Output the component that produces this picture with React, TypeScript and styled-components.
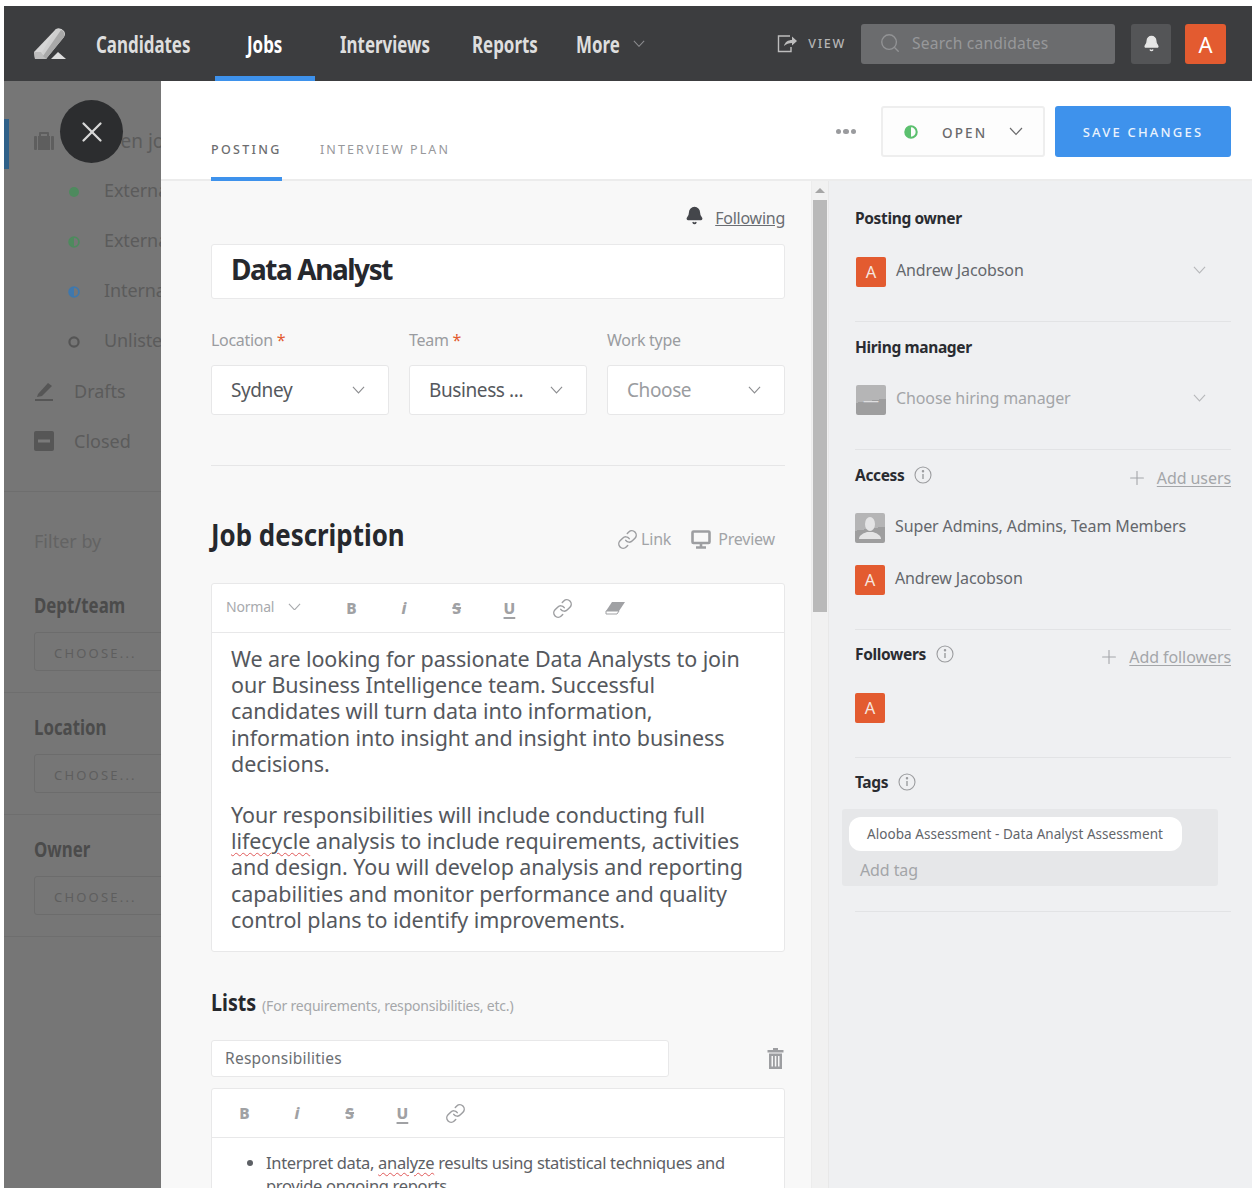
import React from "react";
import styled, { createGlobalStyle } from "styled-components";
import { Bell, Search, Plus, X, Link as LinkIcon } from "lucide-react";

const SANS = `"Noto Sans", "Open Sans", sans-serif`;

const Global = createGlobalStyle`
  html, body { margin: 0; padding: 0; background: #fff; }
  body { font-family: ${SANS}; }
  * { box-sizing: border-box; }
`;

const Page = styled.div`
  width: 1260px; height: 1196px; padding: 6px 8px 8px 4px; background: #fff;
`;
const Frame = styled.div`
  width: 1248px; height: 1182px; overflow: hidden; display: flex; flex-direction: column; position: relative;
`;
const Nav = styled.header`
  height: 75px; flex: none; background: #3c3d3f; display: flex; align-items: stretch; position: relative;
`;
const Logo = styled.div`
  width: 92px; padding: 22px 0 0 30px; flex: none;
`;
const NavItems = styled.nav`display: flex; align-items: stretch;`;
const NavItem = styled.div<{ $w: number; $active?: boolean; $pl?: number }>`
  width: ${p => p.$w}px; padding-left: ${p => p.$pl ?? 0}px;
  display: flex; align-items: center;
  border-bottom: 5px solid ${p => (p.$active ? "#3e92ec" : "transparent")};
  padding-top: 5px;
  color: ${p => (p.$active ? "#fff" : "#dedede")};
`;
const NavLabel = styled.span`
  display: inline-block; font-weight: 700; font-size: 23px; white-space: nowrap;
  transform: scaleX(.735); transform-origin: left center;
`;
const NavChev = styled.span`display: flex; margin-left: -3px;`;
const NavRight = styled.div`
  margin-left: auto; display: flex; align-items: center; padding-right: 26px; height: 75px;
`;
const ViewLink = styled.div`
  display: flex; align-items: center; gap: 10px; margin-right: 15px; color: #b5b5b5;
  font-size: 12.5px; letter-spacing: 1.7px; font-weight: 500;
`;
const SearchBox = styled.div`
  width: 254px; height: 40px; border-radius: 3px; background: #6b6c6e; display: flex; align-items: center;
  padding-left: 18px; gap: 11px; color: #97989a; font-size: 15.6px; margin-right: 16px; letter-spacing: .2px; padding-bottom: 2px;
`;
const NavBtn = styled.div<{ $orange?: boolean }>`
  width: ${p => (p.$orange ? 41 : 40)}px; height: 40px; border-radius: 3px; display: flex; align-items: center; justify-content: center;
  background: ${p => (p.$orange ? "#e35b30" : "#545557")}; color: #fff; font-size: 22px;
  margin-right: ${p => (p.$orange ? 0 : 14)}px;
`;

const Content = styled.div`flex: 1; display: flex; min-height: 0;`;

const Sidebar = styled.aside`
  width: 157px; flex: none; background: #767676; overflow: hidden; position: relative; color: #5b5b5b;
`;
const SideInner = styled.div`width: 300px; padding-top: 38px;`;
const SideActive = styled.div`
  height: 50px; border-left: 5px solid #2f6088; display: flex; align-items: center; padding: 0 0 6px 25px; gap: 40px;
  font-size: 19px;
`;
const SideSub = styled.div`
  height: 50px; display: flex; align-items: center; padding-left: 64px; gap: 24px; font-size: 18px; letter-spacing: -.1px;
  position: relative; top: -4px;
`;
const DotSlot = styled.span`width: 12px; height: 14px; display: flex; align-items: center; justify-content: center; flex: none; padding-top: 3px; box-sizing: content-box;`;
const SideMain = styled.div`
  height: 50px; display: flex; align-items: center; padding-left: 30px; gap: 20px; font-size: 18px;
  position: relative; top: -3px;
`;
const FilterBy = styled.div`
  height: 80px; padding: 36px 0 0 30px; font-size: 18px; line-height: 26px; color: #636363; border-top: 1px solid #6e6e6e;
  margin-top: 22px;
`;
const FilterGroup = styled.div`
  height: 122px; padding: 0 0 0 30px; border-bottom: 1px solid #6e6e6e; display: flex; flex-direction: column;
`;
const FilterTitle = styled.div`
  font-weight: 700; font-size: 22px; color: #4b4b4b; height: 38px; padding-top: 20px; line-height: 26px;
  margin-bottom: 3px; box-sizing: content-box; white-space: nowrap;
  transform: scaleX(.765); transform-origin: left center;
`;
const FilterBox = styled.div`
  width: 220px; height: 39px; border: 1px solid #6c6c6c; border-radius: 3px; padding-left: 19px; line-height: 40px;
  font-size: 13px; letter-spacing: 2.2px; color: #5e5e5e;
`;
const CloseBtn = styled.button`
  position: absolute; left: 56px; top: 19px; width: 63px; height: 63px; border-radius: 50%; border: 0; padding: 0;
  background: #2c2d2f; color: #d8d8d8; display: flex; align-items: center; justify-content: center;
`;

const Panel = styled.main`flex: 1; display: flex; flex-direction: column; min-width: 0; background: #fff;`;
const PanelHead = styled.div`
  height: 100px; flex: none; border-bottom: 2px solid #ececec; display: flex; position: relative; padding-left: 50px;
  align-items: flex-start;
`;
const Tab = styled.div<{ $active?: boolean }>`
  height: 100px; padding-top: 60px; width: ${p => (p.$active ? 71 : 160)}px; margin-right: ${p => (p.$active ? 38 : 0)}px;
  font-size: 12.5px; line-height: 18px; letter-spacing: ${p => (p.$active ? 2.3 : 2.1)}px; font-weight: ${p => (p.$active ? 500 : 400)};
  color: ${p => (p.$active ? "#6d6d6f" : "#97989b")}; white-space: nowrap;
  border-bottom: 4px solid ${p => (p.$active ? "#3e92ec" : "transparent")};
`;
const HeadActions = styled.div`
  margin-left: auto; display: flex; align-items: center; padding: 25px 21px 0 0; height: 76px;
`;
const Dots = styled.div`
  display: flex; gap: 2px; margin-right: 25px;
  & > i { width: 5.5px; height: 5.5px; border-radius: 50%; background: #9a9b9e; display: block; }
`;
const StatusBtn = styled.div`
  width: 164px; height: 51px; border: 2px solid #eeeeee; border-radius: 3px; background: #fdfdfd; display: flex; align-items: center;
  padding-left: 21px; margin-right: 10px;
`;
const StatusText = styled.span`
  font-size: 13.5px; letter-spacing: 2.1px; color: #6a6a6c; margin-left: 24px; width: 67px; font-weight: 500; padding-top: 2px;
`;
const SaveBtn = styled.div`
  width: 176px; height: 51px; border-radius: 3px; background: #3e92ec; color: #eaf3fd; display: flex; align-items: center;
  justify-content: center; font-size: 13px; letter-spacing: 2.2px; font-weight: 500;
`;

const PanelBody = styled.div`flex: 1; display: flex; min-height: 0;`;
const EditCol = styled.div`
  width: 650px; flex: none; background: #f8f8f8; padding: 0 26px 0 50px; overflow: hidden;
`;
const FollowRow = styled.div`
  height: 63px; display: flex; align-items: flex-start; justify-content: flex-end; gap: 11px; padding-top: 25px;
`;
const Following = styled.span`
  font-size: 16px; line-height: 24px; color: #6a6d72; text-decoration: underline; letter-spacing: -.25px;
`;
const TitleInput = styled.div`
  height: 55px; background: #fff; border: 1px solid #e9e9ea; border-radius: 3px; padding-left: 19px; line-height: 49px;
  font-weight: 700; font-size: 28px; color: #26282d; letter-spacing: -1.45px;
`;
const FieldGrid = styled.div`
  display: grid; grid-template-columns: repeat(3, 178px); column-gap: 20px; margin-top: 29px;
  padding-bottom: 50px; border-bottom: 1px solid #e6e6e7;
`;
const Field = styled.div`display: flex; flex-direction: column;`;
const FieldLabel = styled.label`
  font-size: 16px; line-height: 24px; color: #9a9ca0; height: 37px; letter-spacing: -.3px;
  & > b { color: #e35b30; font-weight: 400; }
`;
const SelectBox = styled.div<{ $placeholder?: boolean }>`
  height: 50px; background: #fff; border: 1px solid #e7e7e8; border-radius: 3px; display: flex; align-items: center;
  justify-content: space-between; padding: 0 23px 0 19px; font-size: 19px; letter-spacing: -.4px;
  color: ${p => (p.$placeholder ? "#9a9ca0" : "#55585d")};
`;
const DescHead = styled.div`
  display: flex; align-items: center; justify-content: space-between; height: 48px; margin-top: 44px; padding-right: 10px;
`;
const H2 = styled.h2`
  margin: 0; font-weight: 700; font-size: 31px; color: #26282d; white-space: nowrap;
  transform: scaleX(.835); transform-origin: left center;
`;
const DescTools = styled.div`display: flex; align-items: center; gap: 20px; padding-top: 10px;`;
const Tool = styled.span`
  display: flex; align-items: center; gap: 3px; font-size: 16px; color: #a2a4a7; letter-spacing: -.2px;
`;
const Editor = styled.div<{ $mt: number }>`
  background: #fff; border: 1px solid #e8e8e9; border-radius: 3px; margin-top: ${p => p.$mt}px;
`;
const Toolbar = styled.div<{ $h: number; $pl: number }>`
  height: ${p => p.$h}px; display: flex; align-items: center; padding-left: ${p => p.$pl}px; border-bottom: 1px solid #e8e8e9; color: #a3a4a7;
`;
const StyleSelect = styled.div`
  display: flex; align-items: center; gap: 14px; width: 99px; font-size: 14px; color: #a8aaad; letter-spacing: -.2px; flex: none; padding-bottom: 3px;
`;
const Fmt = styled.span`
  width: 52.7px; flex: none; display: flex; align-items: center; justify-content: center;
`;
const FmtGlyph = styled.span<{ $i?: boolean; $s?: boolean; $u?: boolean }>`
  font-size: 15.5px; font-weight: 800; color: #a0a1a4; line-height: 20px;
  font-style: ${p => (p.$i ? "italic" : "normal")};
  text-decoration: ${p => (p.$s ? "line-through" : p.$u ? "underline" : "none")};
  text-decoration-thickness: 1.5px; text-underline-offset: 3px;
  padding: ${p => (p.$s ? "0 2px" : "0")};
`;
const EditorText = styled.div`
  padding: 13px 19px 18px; font-size: 21.5px; line-height: 26.2px; color: #55585d; letter-spacing: -.08px; white-space: nowrap;
`;
const ParaGap = styled.div`height: 25px;`;
const Misspelt = styled.span`text-decoration: underline wavy #e05a5a 1px; text-underline-offset: 3px;`;
const ListsHead = styled.div`
  display: flex; align-items: baseline; gap: 6px; margin-top: 33px; height: 35px;
`;
const ListsTitle = styled.h3`
  margin: 0 -10px 0 0; font-weight: 700; font-size: 24px; color: #26282d;
  transform: scaleX(.82); transform-origin: left center;
`;
const ListsNote = styled.span`font-size: 14px; color: #a5a7aa; letter-spacing: -.2px;`;
const ListNameRow = styled.div`
  display: flex; align-items: center; justify-content: space-between; margin-top: 20px; padding-right: 1px;
`;
const ListName = styled.div`
  width: 458px; height: 37px; background: #fff; border: 1px solid #e8e8e9; border-radius: 3px; padding-left: 13px; line-height: 34px;
  font-size: 15.5px; color: #6c6f73; letter-spacing: .25px;
`;
const Bullets = styled.ul`
  margin: 0; padding: 13px 0 0 54px; font-size: 16.5px; line-height: 23px; color: #5d6065; letter-spacing: -.33px; white-space: nowrap;
`;

const ScrollTrack = styled.div`
  width: 18px; flex: none; background: #f1f1f1; border-left: 1px solid #ececec; border-right: 1px solid #e8e8e8; padding: 7px 1px 0;
  display: flex; flex-direction: column; align-items: center;
`;
const ScrollArrow = styled.div`
  width: 0; height: 0; border-left: 5px solid transparent; border-right: 5px solid transparent; border-bottom: 5px solid #a6a6a6; margin-bottom: 7px;
`;
const ScrollThumb = styled.div`width: 14px; height: 412px; background: #b9b9b9;`;

const SideCol = styled.div`
  flex: 1; background: #eff0f2; padding: 12px 21px 0 26px;
`;
const Section = styled.section<{ $h: number; $pt?: number }>`
  height: ${p => p.$h}px; border-bottom: 1px solid #e2e3e5; padding-top: ${p => p.$pt ?? 14}px;
`;
const SecHead = styled.div`display: flex; align-items: center; justify-content: space-between; height: 22px;`;
const SecTitleWrap = styled.div`display: flex; align-items: center; gap: 10px;`;
const SecTitle = styled.h4`
  margin: 0; font-size: 15.5px; line-height: 22px; font-weight: 700; color: #2a2c31; letter-spacing: -.35px;
`;
const AddLink = styled.span`
  display: flex; align-items: center; gap: 9px; color: #a4a6a9; font-size: 16px; position: relative; top: 3px; letter-spacing: -.08px;
  & > u { text-underline-offset: 2px; }
`;
const PersonRow = styled.div<{ $mt: number; $pl?: number }>`
  display: flex; align-items: center; gap: 10px; height: 30px; margin-top: ${p => p.$mt}px; padding-left: ${p => p.$pl ?? 0}px;
`;
const PersonName = styled.span<{ $muted?: boolean }>`
  font-size: 16px; color: ${p => (p.$muted ? "#a3a5a8" : "#64676c")}; letter-spacing: -.12px; margin-bottom: 4px;
`;
const Caret = styled.span`margin: 0 25px 4px auto; display: flex; color: #b7b8bb;`;
const Avatar = styled.div`
  width: 30px; height: 30px; border-radius: 2px; background: #e35b30; color: #f6e5df; font-size: 16.5px; display: flex; align-items: center; justify-content: center; flex: none; padding-bottom: 2px;
`;
const GreyAvatar = styled.div`
  width: 30px; height: 30px; border-radius: 2px; flex: none; overflow: hidden; color: #dfdfe0;
  background: linear-gradient(172deg, #b5b5b6 0 52%, #9e9e9f 52% 100%); display: flex; align-items: center; justify-content: center;
`;
const TagBox = styled.div`
  margin: 16px 0 0 -13px; width: 376px; height: 77px; background: #e6e7e9; border-radius: 3px; padding: 8px 0 0 7px;
`;
const TagChip = styled.div`
  width: 333px; height: 34px; border-radius: 12px; background: #fff; display: flex; align-items: center; padding-left: 18px;
  font-size: 13.5px; color: #62656a; letter-spacing: .06px; white-space: nowrap;
`;
const AddTag = styled.div`
  font-size: 16px; color: #a3a5a8; line-height: 24px; margin: 7px 0 0 11px; letter-spacing: -.1px;
`;

const Chev = ({ c = "#8c8d90", w = 13 }: { c?: string; w?: number }) => (
  <svg width={w} height={w * 0.6} viewBox="0 0 14 8.4" fill="none" stroke={c} strokeWidth="1.2">
    <polyline points="1,1 7,7.4 13,1" />
  </svg>
);

const HalfDot = ({ c, size = 14 }: { c: string; size?: number }) => (
  <svg width={size} height={size} viewBox="0 0 14 14">
    <circle cx="7" cy="7" r="5.7" fill="none" stroke={c} strokeWidth="2.1" />
    <path d="M7 1.500a5.500 5.500 0 0 0 0 11z" fill={c} />
  </svg>
);

const InfoIcon = () => (
  <svg width="18" height="18" viewBox="0 0 18 18" fill="none" stroke="#9b9c9f" strokeWidth="1.1">
    <circle cx="9" cy="9" r="8" />
    <line x1="9" y1="8" x2="9" y2="13" strokeWidth="1.4" />
    <circle cx="9" cy="5.3" r=".7" fill="#9b9c9f" />
  </svg>
);

const LogoMark = () => (
  <svg width="33" height="32" viewBox="0 0 33 32">
    <path d="M0 24 L22 1 L28 1 L12 31 L1 31 Z" fill="#d6d6d6" />
    <path d="M1 31 L0 24 L7 24 L12 31 Z" fill="#bdbdbd" />
    <path d="M22 1 Q26 -1 30 3 Q32 6 30 9 L12 31 L8 24 Z" fill="#cfcfcf" />
    <path d="M27 2 Q31 3 30 9 L12 31 L9 28 Z" fill="#a8a8a8" />
    <path d="M17 31 L24 24 L32 31 Z" fill="#dedede" />
  </svg>
);

const ViewIcon = () => (
  <svg width="21" height="19" viewBox="0 0 21 19" fill="none" stroke="#bdbdbd" strokeWidth="1.4">
    <path d="M13 2H1.500v15.500H14V13" />
    <path d="M7 12c1-4 4-6 8-6V2.500l5 4.500-5 4.500V9c-3 0-6 1-8 3z" fill="#bdbdbd" stroke="none" />
  </svg>
);

const Briefcase = () => (
  <svg width="20" height="18" viewBox="0 0 20 18" fill="#5e5e5e">
    <path d="M7 4V2h6v2h2V1a1 1 0 0 0-1-1H6a1 1 0 0 0-1 1v3z" />
    <rect x="0" y="4" width="3" height="14" rx="1" />
    <rect x="4" y="4" width="12" height="14" />
    <rect x="17" y="4" width="3" height="14" rx="1" />
  </svg>
);

const PencilMini = () => (
  <svg width="20" height="20" viewBox="0 0 20 20" fill="#565656">
    <path d="M4 13 L14 2 L18 5 L8 15 L3 16 Z" />
    <rect x="1" y="18" width="18" height="2" />
  </svg>
);

const MinusBox = () => (
  <svg width="20" height="20" viewBox="0 0 20 20">
    <rect width="20" height="20" rx="2" fill="#565656" />
    <rect x="4" y="8.500" width="12" height="3" fill="#7a7a7a" />
  </svg>
);

const MonitorIcon = () => (
  <svg width="20" height="19" viewBox="0 0 20 19" fill="none" stroke="#9d9ea1" strokeWidth="2.600">
    <rect x="1.500" y="1.500" width="17" height="11.500" rx="1" />
    <path d="M10 14v3M5 17.500h10" />
  </svg>
);

const Trash = () => (
  <svg width="17" height="21" viewBox="0 0 17 21" fill="#9d9ea1">
    <path d="M6 0h5v2h5.500v2.500H.5V2H6z" />
    <path d="M2 5.500h13V21H2zM4.500 8v10.500h1.500V8zM7.800 8v10.500h1.500V8zM11 8v10.500h1.500V8z" fillRule="evenodd" />
  </svg>
);

const EraserIcon = () => (
  <svg width="20" height="14" viewBox="0 0 20 14">
    <path d="M7 1h13l-6 9H1z" fill="#a0a1a4" />
    <path d="M1 10h13l-2 3H1z" fill="none" stroke="#a0a1a4" />
  </svg>
);

const ChainIcon = ({ s = 21, c = "#9d9ea1" }: { s?: number; c?: string }) => (
  <LinkIcon size={s} color={c} strokeWidth={1.7} />
);

const PersonGlyph = () => (
  <svg width="26" height="24" viewBox="0 0 26 24" fill="#e4e4e5">
    <ellipse cx="13" cy="8" rx="5" ry="7" />
    <path d="M2 23c0-4 5-6 8-7h6c3 1 8 3 8 7z" />
  </svg>
);

const FormatButtons = ({ eraser }: { eraser?: boolean }) => (
  <>
    <Fmt><FmtGlyph>B</FmtGlyph></Fmt>
    <Fmt><FmtGlyph $i>i</FmtGlyph></Fmt>
    <Fmt><FmtGlyph $s>S</FmtGlyph></Fmt>
    <Fmt><FmtGlyph $u>U</FmtGlyph></Fmt>
    <Fmt><ChainIcon /></Fmt>
    {eraser && <Fmt><EraserIcon /></Fmt>}
  </>
);

export default function App() {
  return (
    <Page>
      <Global />
      <Frame>
        <Nav>
          <Logo><LogoMark /></Logo>
          <NavItems>
            <NavItem $w={119}><NavLabel>Candidates</NavLabel></NavItem>
            <NavItem $w={100} $active $pl={32}><NavLabel>Jobs</NavLabel></NavItem>
            <NavItem $w={157} $pl={25}><NavLabel>Interviews</NavLabel></NavItem>
            <NavItem $w={104}><NavLabel>Reports</NavLabel></NavItem>
            <NavItem $w={90}><NavLabel>More</NavLabel><NavChev><Chev w={12} /></NavChev></NavItem>
          </NavItems>
          <NavRight>
            <ViewLink><ViewIcon /><span>VIEW</span></ViewLink>
            <SearchBox><Search size={22} color="#929395" strokeWidth={1.5} /><span>Search candidates</span></SearchBox>
            <NavBtn><Bell size={17} color="#e6e6e6" fill="#e6e6e6" /></NavBtn>
            <NavBtn $orange>A</NavBtn>
          </NavRight>
        </Nav>
        <Content>
          <Sidebar>
            <SideInner>
              <SideActive><Briefcase /><span>Open jobs</span></SideActive>
              <SideSub><DotSlot><svg width="12" height="12"><circle cx="6" cy="6" r="5" fill="#4e8a5e" /></svg></DotSlot><span>External</span></SideSub>
              <SideSub><DotSlot><HalfDot c="#4e8a5e" /></DotSlot><span>External</span></SideSub>
              <SideSub><DotSlot><HalfDot c="#3f78ad" /></DotSlot><span>Internal</span></SideSub>
              <SideSub><DotSlot><svg width="12" height="12" fill="none"><circle cx="6" cy="6" r="4.600" stroke="#555" strokeWidth="2.200" /></svg></DotSlot><span>Unlisted</span></SideSub>
              <SideMain><PencilMini /><span>Drafts</span></SideMain>
              <SideMain><MinusBox /><span>Closed</span></SideMain>
              <FilterBy>Filter by</FilterBy>
              <FilterGroup><FilterTitle>Dept/team</FilterTitle><FilterBox>CHOOSE...</FilterBox></FilterGroup>
              <FilterGroup><FilterTitle>Location</FilterTitle><FilterBox>CHOOSE...</FilterBox></FilterGroup>
              <FilterGroup><FilterTitle>Owner</FilterTitle><FilterBox>CHOOSE...</FilterBox></FilterGroup>
            </SideInner>
            <CloseBtn><X size={34} strokeWidth={1.6} /></CloseBtn>
          </Sidebar>
          <Panel>
            <PanelHead>
              <Tab $active>POSTING</Tab>
              <Tab>INTERVIEW PLAN</Tab>
              <HeadActions>
                <Dots><i /><i /><i /></Dots>
                <StatusBtn>
                  <HalfDot c="#5cc06f" />
                  <StatusText>OPEN</StatusText>
                  <Chev c="#6a6a6c" w={14} />
                </StatusBtn>
                <SaveBtn>SAVE CHANGES</SaveBtn>
              </HeadActions>
            </PanelHead>
            <PanelBody>
              <EditCol>
                <FollowRow>
                  <Bell size={19} color="#44464b" fill="#44464b" />
                  <Following>Following</Following>
                </FollowRow>
                <TitleInput>Data Analyst</TitleInput>
                <FieldGrid>
                  <Field>
                    <FieldLabel>Location <b>*</b></FieldLabel>
                    <SelectBox>Sydney <Chev /></SelectBox>
                  </Field>
                  <Field>
                    <FieldLabel>Team <b>*</b></FieldLabel>
                    <SelectBox>Business ... <Chev /></SelectBox>
                  </Field>
                  <Field>
                    <FieldLabel>Work type</FieldLabel>
                    <SelectBox $placeholder>Choose <Chev /></SelectBox>
                  </Field>
                </FieldGrid>
                <DescHead>
                  <H2>Job description</H2>
                  <DescTools>
                    <Tool><ChainIcon /> Link</Tool>
                    <Tool><MonitorIcon />&nbsp;Preview</Tool>
                  </DescTools>
                </DescHead>
                <Editor $mt={25}>
                  <Toolbar $h={49} $pl={14}>
                    <StyleSelect>Normal <Chev c="#a8aaad" /></StyleSelect>
                    <FormatButtons eraser />
                  </Toolbar>
                  <EditorText>
                    We are looking for passionate Data Analysts to join<br />
                    our Business Intelligence team. Successful<br />
                    candidates will turn data into information,<br />
                    information into insight and insight into business<br />
                    decisions.
                    <ParaGap />
                    Your responsibilities will include conducting full<br />
                    <Misspelt>lifecycle</Misspelt> analysis to include requirements, activities<br />
                    and design. You will develop analysis and reporting<br />
                    capabilities and monitor performance and quality<br />
                    control plans to identify improvements.
                  </EditorText>
                </Editor>
                <ListsHead>
                  <ListsTitle>Lists</ListsTitle>
                  <ListsNote>(For requirements, responsibilities, etc.)</ListsNote>
                </ListsHead>
                <ListNameRow>
                  <ListName>Responsibilities</ListName>
                  <Trash />
                </ListNameRow>
                <Editor $mt={11}>
                  <Toolbar $h={49} $pl={6}>
                    <FormatButtons />
                  </Toolbar>
                  <Bullets>
                    <li>Interpret data, <Misspelt>analyze</Misspelt> results using statistical techniques and<br />provide ongoing reports</li>
                  </Bullets>
                </Editor>
              </EditCol>
              <ScrollTrack><ScrollArrow /><ScrollThumb /></ScrollTrack>
              <SideCol>
                <Section $h={129}>
                  <SecHead><SecTitle>Posting owner</SecTitle></SecHead>
                  <PersonRow $mt={28} $pl={1}>
                    <Avatar>A</Avatar><PersonName>Andrew Jacobson</PersonName>
                    <Caret><Chev c="#b7b8bb" /></Caret>
                  </PersonRow>
                </Section>
                <Section $h={128}>
                  <SecHead><SecTitle>Hiring manager</SecTitle></SecHead>
                  <PersonRow $mt={27} $pl={1}>
                    <GreyAvatar>—</GreyAvatar><PersonName $muted>Choose hiring manager</PersonName>
                    <Caret><Chev c="#b7b8bb" /></Caret>
                  </PersonRow>
                </Section>
                <Section $h={180}>
                  <SecHead>
                    <SecTitleWrap><SecTitle>Access</SecTitle><InfoIcon /></SecTitleWrap>
                    <AddLink><Plus size={22} strokeWidth={1.2} /><u>Add users</u></AddLink>
                  </SecHead>
                  <PersonRow $mt={27}>
                    <GreyAvatar><PersonGlyph /></GreyAvatar><PersonName>Super Admins, Admins, Team Members</PersonName>
                  </PersonRow>
                  <PersonRow $mt={22}>
                    <Avatar>A</Avatar><PersonName>Andrew Jacobson</PersonName>
                  </PersonRow>
                </Section>
                <Section $h={128} $pt={13}>
                  <SecHead>
                    <SecTitleWrap><SecTitle>Followers</SecTitle><InfoIcon /></SecTitleWrap>
                    <AddLink><Plus size={22} strokeWidth={1.2} /><u>Add followers</u></AddLink>
                  </SecHead>
                  <PersonRow $mt={28}><Avatar>A</Avatar></PersonRow>
                </Section>
                <Section $h={154} $pt={13}>
                  <SecHead><SecTitleWrap><SecTitle>Tags</SecTitle><InfoIcon /></SecTitleWrap></SecHead>
                  <TagBox>
                    <TagChip>Alooba Assessment - Data Analyst Assessment</TagChip>
                    <AddTag>Add tag</AddTag>
                  </TagBox>
                </Section>
              </SideCol>
            </PanelBody>
          </Panel>
        </Content>
      </Frame>
    </Page>
  );
}
